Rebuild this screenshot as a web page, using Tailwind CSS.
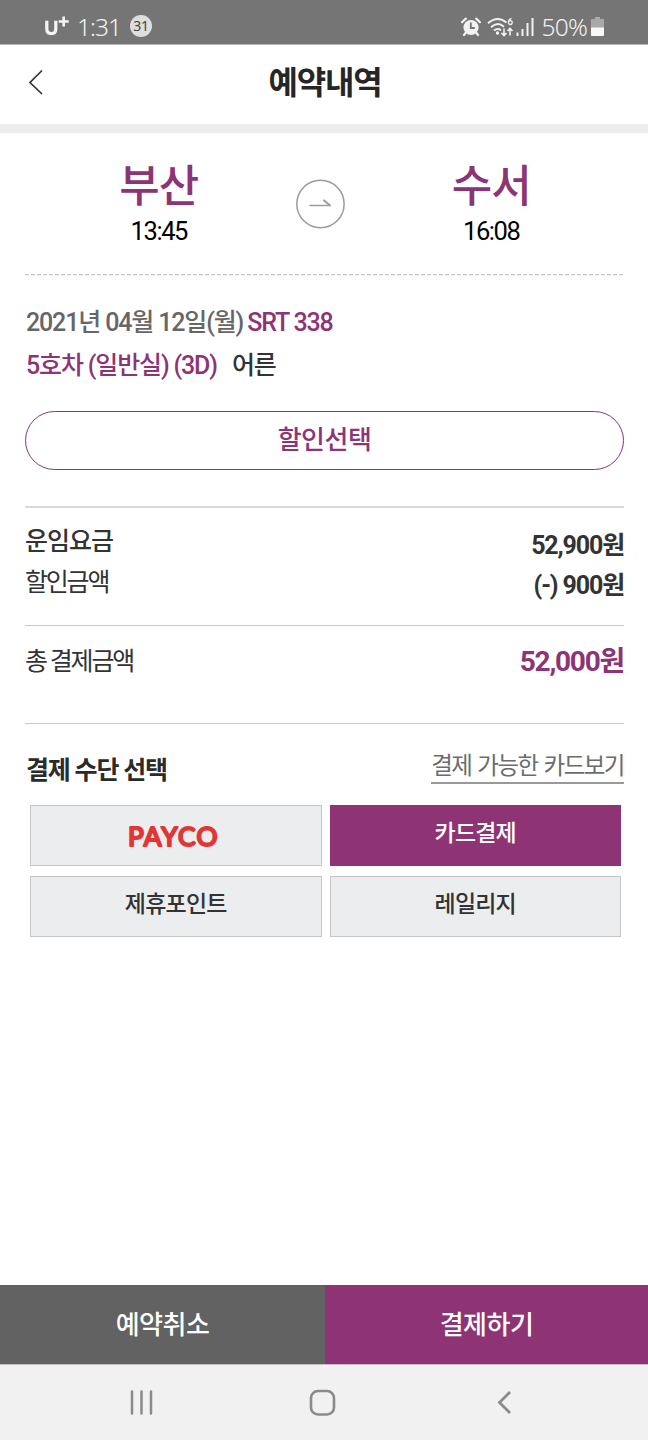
<!DOCTYPE html>
<html lang="ko">
<head>
<meta charset="utf-8">
<meta name="viewport" content="width=device-width, initial-scale=1">
<title>예약내역</title>
<script src="https://cdn.jsdelivr.net/npm/@tailwindcss/browser@4"></script>
</head>
<body class="bg-white">
<div class="flex h-[1440px] w-[648px] flex-col overflow-hidden bg-white font-['Roboto','Noto_Sans_CJK_KR',sans-serif] text-[25px] tracking-[-1px] text-[#333]">

  <!-- Status bar -->
  <div class="flex h-[45px] shrink-0 items-center justify-between border-b border-[#b5b5b5] bg-[#757575] pr-[44px] pl-[44px] pt-[9px] text-[#f2f2f2]">
    <div class="flex items-center">
      <svg class="h-[22px] w-[26px]" viewBox="0 0 26 22" fill="none" stroke="#f5f5f5"><path d="M2.800 4.800v8q0 4.800 4.500 4.800t4.500-4.800v-8" stroke-width="3.200"/><path d="M19.700 0.500v10M14.700 5.500h10" stroke-width="2.600"/></svg>
      <span class="ml-[7px] w-[44px] font-['Noto_Sans'] text-[24.500px] leading-8 font-light tracking-[-1px] whitespace-nowrap">1:31</span>
      <span class="ml-[9px] flex size-[22px] -translate-y-[1px] items-center justify-center rounded-full bg-[#dedede] font-['Noto_Sans'] text-[14px] leading-none tracking-[-0.300px] text-[#444]">31</span>
    </div>
    <div class="flex items-center">
      <svg class="h-[20px] w-[20px]" viewBox="0 0 20 20"><circle cx="10" cy="10.500" r="7.600" fill="#f2f2f2"/><path d="M5 15.500 3 18M15 15.500l2 2.500M1 5.200 4.800 1.600M19 5.200l-3.800-3.600" stroke="#f2f2f2" stroke-width="2.200" stroke-linecap="round"/><path d="M9.800 5.500v5.500h4" fill="none" stroke="#757575" stroke-width="1.800"/></svg>
      <svg class="ml-[6px] h-[20px] w-[27px]" viewBox="0 0 27 20" fill="none" stroke="#f2f2f2"><path d="M1 6.200Q10.500-2 19.500 5.500M4 10.200Q10.500 4 17 9.700M7 13.600Q10.500 10.600 14 13.200" stroke-width="2"/><circle cx="10.500" cy="16" r="1.700" fill="#f2f2f2" stroke="none"/><path d="M17 11.500v7M14.500 16l2.500 2.500 2.500-2.500M23 18.500v-7M20.500 14l2.500-2.500 2.500 2.500" stroke-width="1.600"/><path d="M24.500 1.300Q21.500 2 21.400 5.300" stroke-width="1.300"/><circle cx="23.300" cy="5.600" r="1.900" stroke-width="1.300"/></svg>
      <svg class="ml-[2px] h-[20px] w-[18px]" viewBox="0 0 18 20" fill="none" stroke="#f2f2f2" stroke-width="2"><path d="M1.500 15.500V19M6.500 12v7M11.500 6v13M16.500 1v18"/></svg>
      <span class="ml-[8px] font-['Noto_Sans'] text-[24.500px] leading-8 font-light tracking-[-0.800px]">50%</span>
      <svg class="ml-[4px] h-[20px] w-[13px]" viewBox="0 0 13 20"><path d="M4 0h5v2h3q1 0 1 1v8H0V3q0-1 1-1h3z" fill="#a9a9a9"/><path d="M0 10.500h13V18q0 1-1 1H1q-1 0-1-1z" fill="#f8f8f8"/></svg>
    </div>
  </div>

  <!-- Title bar -->
  <header class="flex h-[88px] shrink-0 items-center border-b-[9px] border-[#ecedef] px-[28px] pb-[5px]">
    <svg class="h-[26px] w-[16px]" viewBox="0 0 16 26" fill="none" stroke="#333" stroke-width="1.700"><path d="M14 1.500 2 13.500 14 25"/></svg>
    <h1 class="flex-1 pt-[2px] pr-[14px] text-center text-[32px] leading-10 font-bold tracking-[-1.200px] text-[#262626]">예약내역</h1>
  </header>

  <main class="flex flex-1 flex-col pr-[24px] pl-[25px]">
    <!-- Route -->
    <section class="flex h-[142px] shrink-0 items-start pt-[25px]">
      <div class="flex w-[268px] flex-col items-center text-center">
        <strong class="h-[54px] pt-[2px] text-[44px] leading-[54px] font-medium tracking-[-1px] text-[#8c3475]">부산</strong>
        <span class="text-[25.500px] leading-[38px] tracking-[-1.400px] text-black">13:45</span>
      </div>
      <svg class="mt-[21px] ml-[3px] size-[50px]" viewBox="0 0 50 50" fill="none"><circle cx="24.500" cy="25" r="23.700" stroke="#9c9c9c" stroke-width="1.500"/><path d="M13.500 26.500h21" stroke="#9c9c9c" stroke-width="1.500"/><path d="M27.500 21l7 5.700" stroke="#9c9c9c" stroke-width="2"/></svg>
      <div class="ml-[13px] flex w-[266px] flex-col items-center text-center">
        <strong class="h-[54px] pt-[2px] text-[44px] leading-[54px] font-medium tracking-[-1px] text-[#8c3475]">수서</strong>
        <span class="text-[25.500px] leading-[38px] tracking-[-1.400px] text-black">16:08</span>
      </div>
    </section>
    <svg class="-mt-[1px] h-[2px] w-full shrink-0" viewBox="0 0 599 2"><path d="M0 .7h599" stroke="#c4c4c4" stroke-width="1.300" stroke-dasharray="4 2"/></svg>

    <!-- Train details -->
    <section class="mt-[25px] h-[110px] shrink-0 pt-[1px] pl-[1px] text-[25px] leading-[42px] font-medium">
      <p class="whitespace-nowrap tracking-[-1.150px] text-[#666]">2021년 04월 12일(월) <span class="-ml-[1px] text-[#8c3475]">SRT 338</span></p>
      <p class="pt-[1px] whitespace-nowrap tracking-[-1.150px] text-[#8c3475]">5호차 (일반실) (3D) <span class="ml-[10px] text-[#333]">어른</span></p>
    </section>

    <button class="h-[59px] shrink-0 rounded-full border border-[#8c3475] pb-[1px] text-[26px] leading-10 font-medium tracking-[-0.500px] text-[#8c3475]">할인선택</button>

    <!-- Fare -->
    <section class="mt-[36px] flex h-[119px] shrink-0 justify-between border-t-2 border-[#d9d9d9] pt-[14px]">
      <div class="leading-10">
        <p class="font-medium tracking-[-1px]">운임요금</p>
        <p class="pt-[1px] tracking-[-2.200px]">할인금액</p>
      </div>
      <div class="pt-[4px] text-right leading-10 font-bold tracking-[-1.150px]">
        <p>52,900원</p>
        <p>(-) 900원</p>
      </div>
    </section>
    <section class="flex h-[98px] shrink-0 items-start justify-between border-t border-[#c9c9c9] pt-[15px] leading-10">
      <p class="pt-[1px] tracking-[-2.200px]">총 결제금액</p>
      <p class="pt-[1px] text-[28px] font-bold tracking-[-1.250px] text-[#8c3475]">52,000원</p>
    </section>

    <!-- Payment methods -->
    <section class="shrink-0 border-t border-[#c9c9c9]">
      <div class="flex h-[81px] items-start justify-between">
        <h2 class="pt-[27px] pl-[1px] leading-10 font-bold tracking-[-1.200px] text-[#2b2b2b]">결제 수단 선택</h2>
        <a class="mt-[22px] h-[38px] border-b-2 border-[#999] pt-[2px] text-[23.500px] leading-9 font-normal tracking-[-1.500px] [word-spacing:1.500px] text-[#6c6c6c]">결제 가능한 카드보기</a>
      </div>
      <div class="mr-[3px] ml-[5px] grid grid-cols-2 gap-x-[8px] gap-y-[10px] text-[23px] leading-9 font-medium tracking-[-0.800px]">
        <button class="flex h-[61px] items-center justify-center border border-[#c6c6c6] bg-[#ecedef]">
          <svg class="-ml-[3px] h-[40px] w-[110px]" viewBox="0 0 110 40"><text x="9" y="29.500" textLength="91" lengthAdjust="spacingAndGlyphs" font-family="Lato" font-weight="400" font-size="26.500" letter-spacing="1" fill="#e03636" stroke="#e03636" stroke-width="2.200" stroke-linejoin="round" class="tracking-[1.500px]">PAYCO</text></svg>
        </button>
        <button class="h-[61px] border border-[#8c3475] bg-[#8e3475] pb-[4px] text-white">카드결제</button>
        <button class="h-[61px] border border-[#c6c6c6] bg-[#ecedef] pb-[4px]">제휴포인트</button>
        <button class="h-[61px] border border-[#c6c6c6] bg-[#ecedef] pb-[4px]">레일리지</button>
      </div>
    </section>
  </main>

  <!-- Actions -->
  <div class="flex h-[79px] shrink-0 text-[26px] font-medium tracking-[-0.500px] text-white">
    <button class="w-[325px] bg-[#626262] pt-[2px]">예약취소</button>
    <button class="flex-1 bg-[#8e3475] pt-[2px]">결제하기</button>
  </div>

  <!-- System navigation -->
  <nav class="flex h-[76px] shrink-0 items-center border-t border-[#c4bcc2] bg-[#f1f1f1] pl-[130px]">
    <svg class="h-[28px] w-[24px]" viewBox="0 0 24 28" stroke="#8a8a8a" stroke-width="2.500" stroke-linecap="round"><path d="M2 2.500v22M11.500 2.500v22M21 2.500v22"/></svg>
    <svg class="ml-[155px] h-[28px] w-[28px]" viewBox="0 0 28 28" fill="none" stroke="#8a8a8a" stroke-width="2.600"><rect x="2" y="2" width="23" height="23.500" rx="7"/></svg>
    <svg class="ml-[160px] h-[28px] w-[16px]" viewBox="0 0 16 28" fill="none" stroke="#8a8a8a" stroke-width="2.800"><path d="M13 3 2.500 13.500 13 24"/></svg>
  </nav>
</div>
</body>
</html>
